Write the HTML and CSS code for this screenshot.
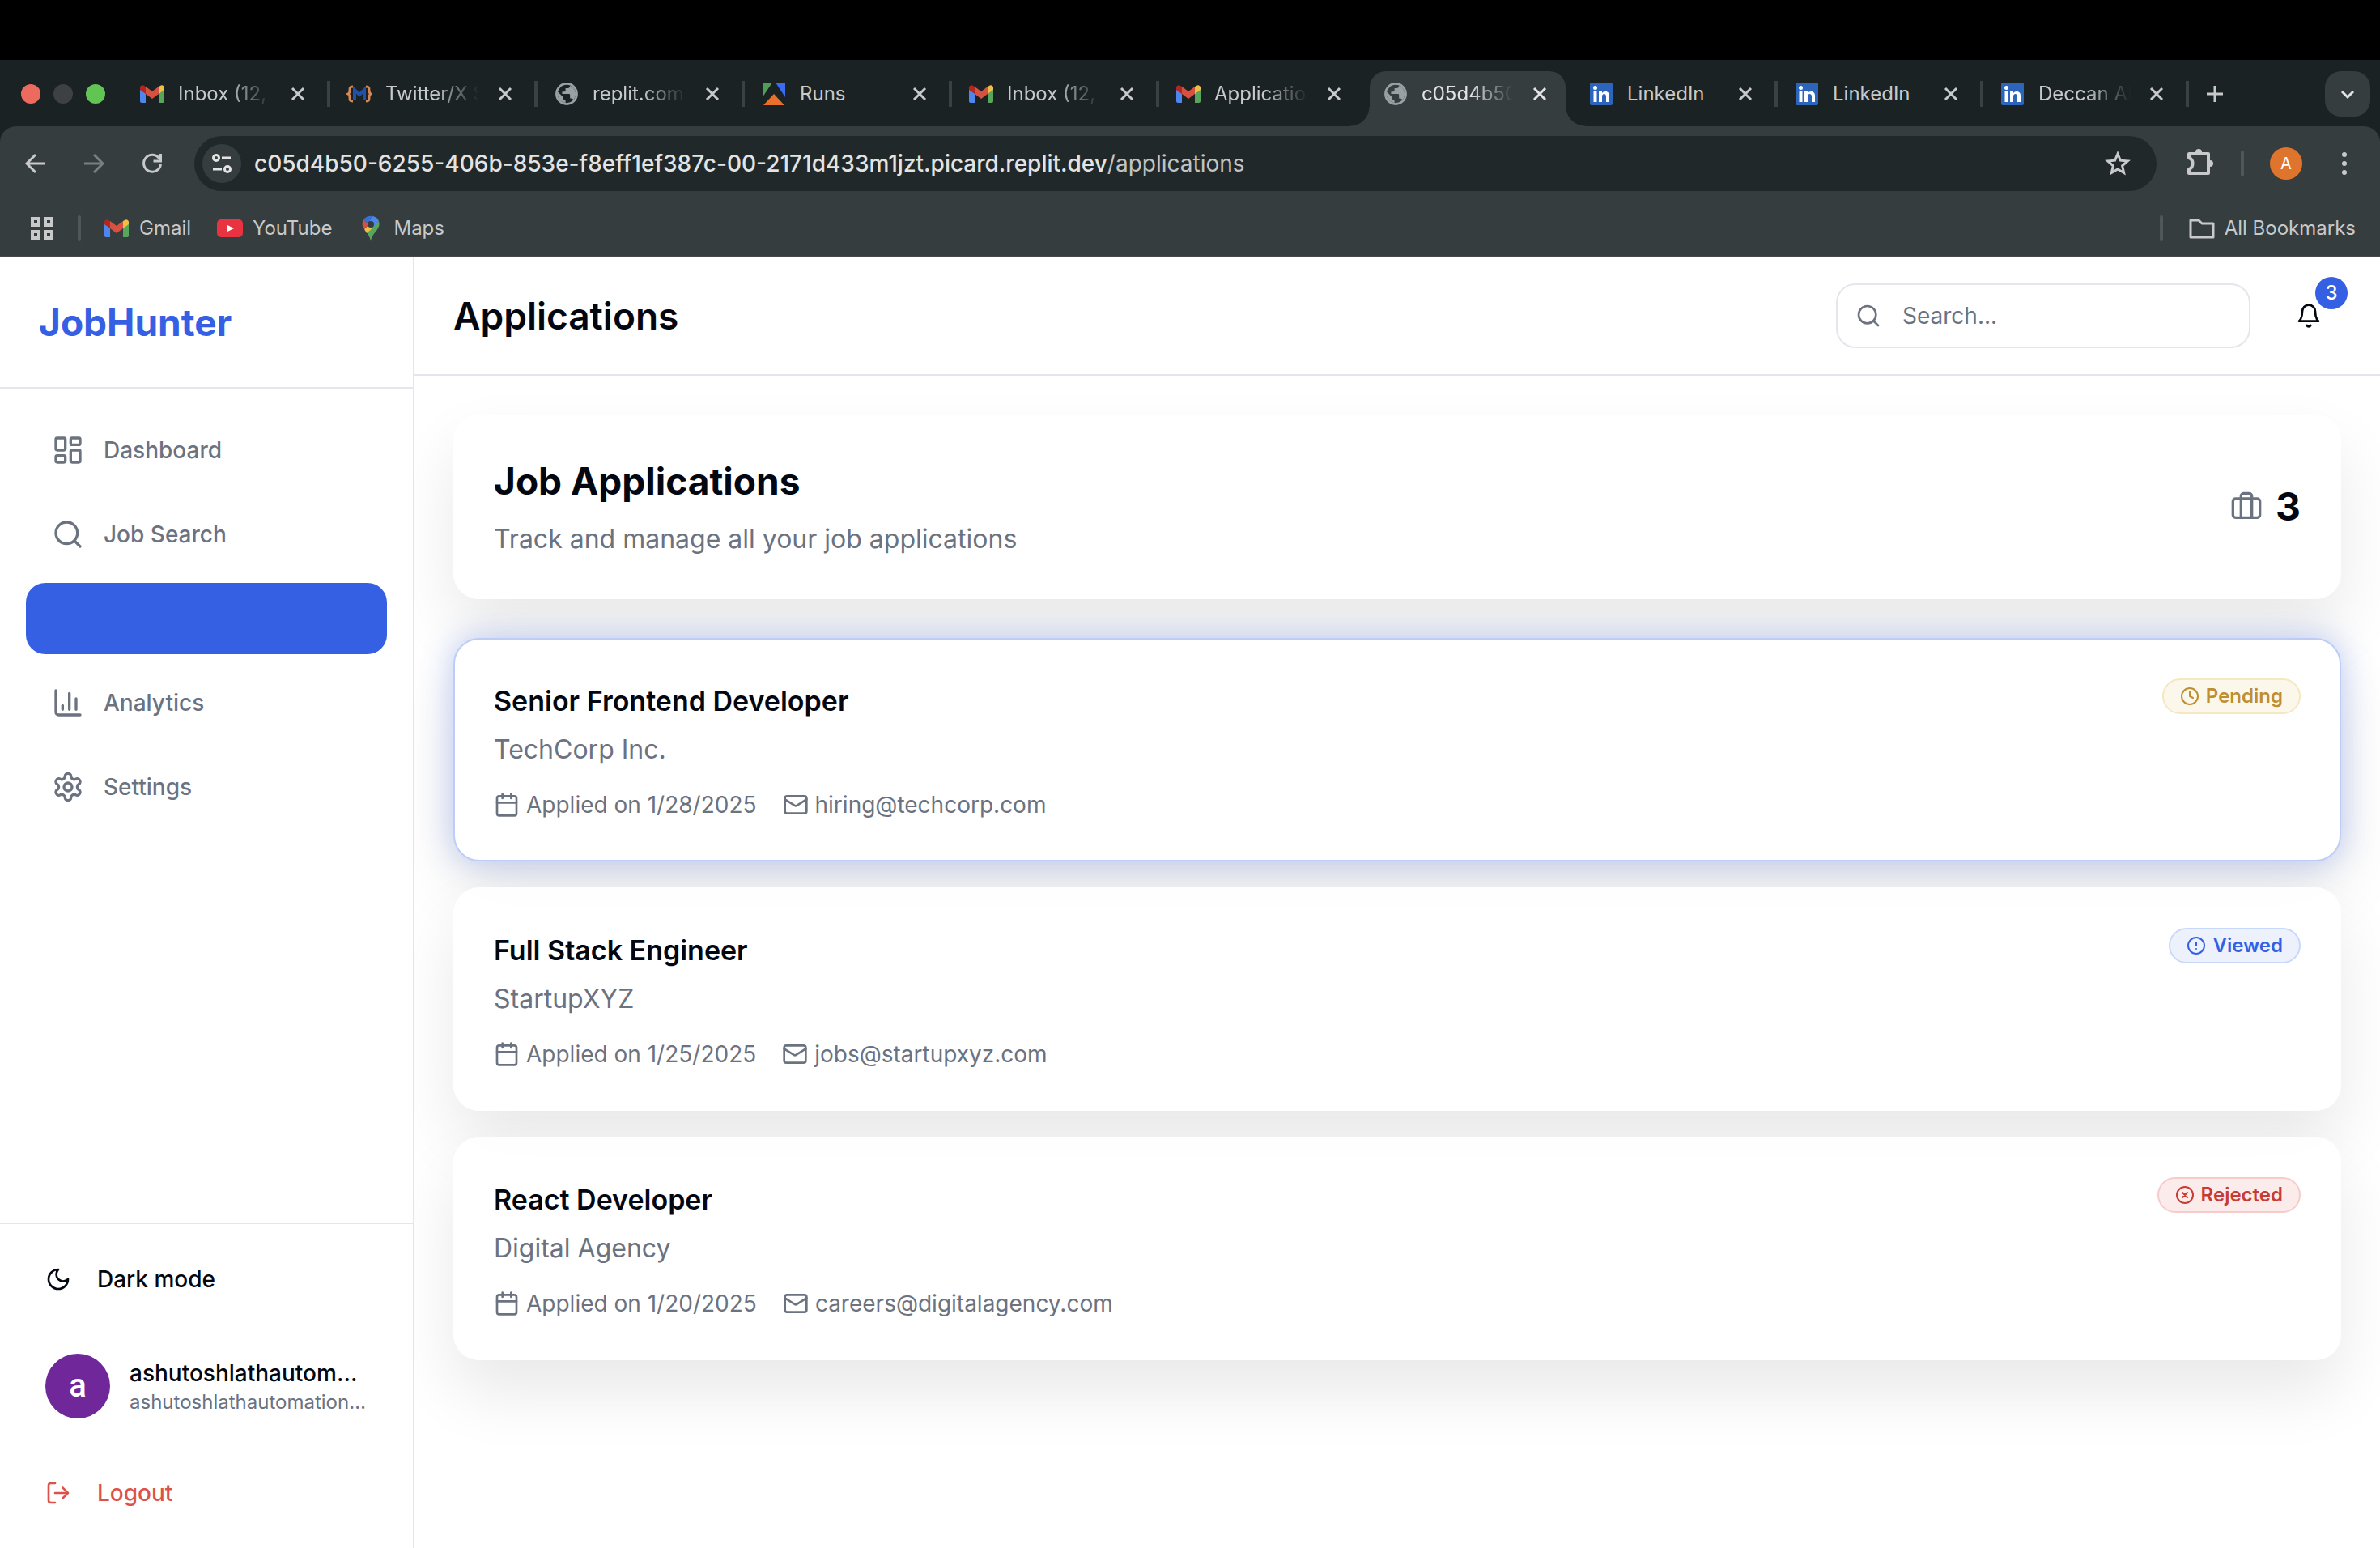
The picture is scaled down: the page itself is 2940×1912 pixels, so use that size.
FILE: index.html
```html
<!DOCTYPE html>
<html lang="en">
<head>
<meta charset="utf-8">
<title>JobHunter – Applications</title>
<link rel="stylesheet" href="styles.css">
</head>
<body>
<svg class="defs" aria-hidden="true">
  <symbol id="gmail" viewBox="0 0 32 32"><path fill="#4f86ec" d="M1 10l7 5v12H3a2 2 0 0 1-2-2z"/><path fill="#58a55c" d="M31 10l-7 5v12h5a2 2 0 0 0 2-2z"/><path fill="#f1bd42" d="M24 7l2-1c2-2 5 0 5 2v3l-7 5z"/><path fill="#b3261e" d="M8 7L6 6C4 4 1 6 1 8v3l7 5z"/><path fill="#d85140" d="M8 7l8 6 8-6v9l-8 6-8-6z"/></symbol>
  <symbol id="globe" viewBox="0.5 0.5 23 23"><circle cx="12" cy="12" r="9" fill="none" stroke="#9aa0a4" stroke-width="2"/><path fill="#9aa0a4" d="M11 19.930c-3.950-.49-7-3.850-7-7.930 0-.62.08-1.210.21-1.790L9 15v1c0 1.100.9 2 2 2zM17.900 17.390c-.26-.81-1-1.390-1.900-1.390h-1v-3c0-.55-.45-1-1-1H8v-2h2c.55 0 1-.45 1-1V7h2c1.100 0 2-.9 2-2v-.41c2.930 1.190 5 4.060 5 7.410 0 2.080-.8 3.970-2.100 5.390z"/></symbol>
  <symbol id="linkedin" viewBox="0 0 32 32"><rect x="2" y="2" width="28" height="28" rx="2" fill="#2d64bc"/><g fill="#fff"><circle cx="8.500" cy="8.500" r="2.500"/><path d="M6.500 13h4v13h-4zM13 13h4v2c2-3 9-3 9 3v8h-4v-7c0-4-5-4-5 0v7h-4z"/></g></symbol>
  <symbol id="close" viewBox="0 0 20 20"><path d="M3 3l14 14M17 3L3 17" stroke="currentColor" stroke-width="3" fill="none"/></symbol>
  <symbol id="calendar" viewBox="0 0 24 24"><path d="M8 2v4M16 2v4M3 10h18"/><rect x="3" y="4" width="18" height="18" rx="2"/></symbol>
  <symbol id="mail" viewBox="0 0 24 24"><rect x="2" y="4" width="20" height="16" rx="2"/><path d="m22 7-8.970 5.700a1.940 1.940 0 0 1-2.060 0L2 7"/></symbol>
  <symbol id="search" viewBox="0 0 24 24"><circle cx="11" cy="11" r="8"/><path d="m21 21-4.300-4.300"/></symbol>
</svg>

<div class="browser">
  <div class="tabstrip">
    <div class="lights"><i class="red"></i><i class="gray"></i><i class="green"></i></div>
    <div class="tabs">
      <div class="tab"><svg class="fav"><use href="#gmail"/></svg><span class="fade">Inbox (12,</span><button aria-label="Close tab"><svg><use href="#close"/></svg></button></div>
      <div class="tab"><svg class="fav" viewBox="0 0 32 32"><g fill="none" stroke="#d68a52" stroke-width="3"><path d="M8 7c-4 0-4 1-4 5 0 2 0 3-2 4 2 1 2 2 2 4 0 4 0 5 4 5M24 7c4 0 4 1 4 5 0 2 0 3 2 4-2 1-2 2-2 4 0 4 0 5-4 5"/></g><path fill="none" stroke="#234fae" stroke-width="4" d="M10 24V11l6 6 6-6v13"/></svg><span class="fade">Twitter/X S</span><button aria-label="Close tab"><svg><use href="#close"/></svg></button></div>
      <div class="tab"><svg class="fav"><use href="#globe"/></svg><span class="fade">replit.com</span><button aria-label="Close tab"><svg><use href="#close"/></svg></button></div>
      <div class="tab"><svg class="fav" viewBox="0 0 32 32"><path fill="#4f9e56" d="M2 2h12L2 20z"/><path fill="#3a6cf0" d="M18 2h12v18z"/><path fill="#e8702a" d="M16 16l13 14H3z"/></svg><span>Runs</span><button aria-label="Close tab"><svg><use href="#close"/></svg></button></div>
      <div class="tab"><svg class="fav"><use href="#gmail"/></svg><span class="fade">Inbox (12,</span><button aria-label="Close tab"><svg><use href="#close"/></svg></button></div>
      <div class="tab last"><svg class="fav"><use href="#gmail"/></svg><span class="fade">Applicatio</span><button aria-label="Close tab"><svg><use href="#close"/></svg></button></div>
      <div class="tab active"><svg class="fav"><use href="#globe"/></svg><span class="fade">c05d4b50</span><button aria-label="Close tab"><svg><use href="#close"/></svg></button></div>
      <div class="tab"><svg class="fav"><use href="#linkedin"/></svg><span>LinkedIn</span><button aria-label="Close tab"><svg><use href="#close"/></svg></button></div>
      <div class="tab"><svg class="fav"><use href="#linkedin"/></svg><span>LinkedIn</span><button aria-label="Close tab"><svg><use href="#close"/></svg></button></div>
      <div class="tab"><svg class="fav"><use href="#linkedin"/></svg><span class="fade">Deccan AI</span><button aria-label="Close tab"><svg><use href="#close"/></svg></button></div>
    </div>
    <button class="newtab" aria-label="New tab"><svg viewBox="0 0 24 24"><path d="M12 2v20M2 12h20" stroke="currentColor" stroke-width="3"/></svg></button>
    <button class="tabmenu" aria-label="Search tabs"><svg viewBox="0 0 24 24"><path d="M5 9l7 7 7-7" fill="none" stroke="currentColor" stroke-width="3"/></svg></button>
  </div>
  <div class="toolbar">
    <button aria-label="Back"><svg viewBox="0 0 32 32"><path d="M28 16H5M16 5L5 16l11 11"/></svg></button>
    <button class="dim" aria-label="Forward"><svg viewBox="0 0 32 32"><path d="M4 16h23M16 5l11 11-11 11"/></svg></button>
    <button aria-label="Reload"><svg viewBox="0 0 32 32"><path d="M24.500 9.500A10.500 10.500 0 1 0 26.500 17M26.500 4v9h-9"/></svg></button>
    <div class="omnibox">
      <button class="site" aria-label="Site information"><svg viewBox="0 0 32 32"><circle cx="9" cy="9" r="3.500"/><path d="M16 9h11M5 23h11"/><circle cx="23" cy="23" r="3.500"/></svg></button>
      <a class="url" href="#">c05d4b50-6255-406b-853e-f8eff1ef387c-00-2171d433m1jzt.picard.replit.dev<span>/applications</span></a>
      <button class="star" aria-label="Bookmark this tab"><svg viewBox="0 0 32 32"><path d="M16 4l3.400 8.200 8.900.8-6.700 5.800 2 8.700L16 23l-7.600 4.500 2-8.700-6.700-5.800 8.900-.8z"/></svg></button>
    </div>
    <button class="ext" aria-label="Extensions"><svg viewBox="0 0 36 36"><path d="M6 6h24v24H6v-5c6-2 6-12 0-14z" stroke-width="4" stroke-linejoin="round"/><g fill="currentColor" stroke="none"><circle cx="18" cy="4" r="4"/><circle cx="32" cy="18" r="4"/></g></svg></button>
    <i class="sep"></i>
    <button class="profile" aria-label="Profile">A</button>
    <button class="more" aria-label="Menu"><svg viewBox="0 0 32 32"><g fill="currentColor" stroke="none"><circle cx="16" cy="5" r="3"/><circle cx="16" cy="16" r="3"/><circle cx="16" cy="27" r="3"/></g></svg></button>
  </div>
  <div class="bookmarks">
    <button aria-label="Apps"><svg viewBox="0 0 32 32"><path d="M4 4h8v8H4zM20 4h8v8h-8zM4 20h8v8H4zM20 20h8v8h-8z"/></svg></button>
    <i class="sep"></i>
    <a class="first" href="#"><svg><use href="#gmail"/></svg>Gmail</a>
    <a href="#"><svg viewBox="0 0 32 32"><rect y="5" width="32" height="22" rx="5" fill="#ea3340"/><path fill="#fff" d="M13 12l8 4-8 4z"/></svg>YouTube</a>
    <a href="#"><svg viewBox="0 0 32 32"><path fill="#58a55c" d="M26 7c3 11-8 13-10 25-1-5-3-8-5-11z"/><path fill="#f1bd42" d="M8 17l5-5 6 3-8 7c-1-2-2-3-3-5z"/><path fill="#d85140" d="M7 5l6 6-5 6c-3-4-3-8-1-12z"/><path fill="#3b6fd8" d="M7 5c3-4 8-5 12-4l-7 9z"/><path fill="#4f86ec" d="M19 1c3 1 6 3 7 6l-8 9-6-6z"/><circle cx="16" cy="11" r="4" fill="#363d3f"/></svg>Maps</a>
    <i class="sep push"></i>
    <a class="all" href="#"><svg viewBox="0 0 32 32"><path d="M2 6h10l4 4h14v17H2z" fill="none" stroke="currentColor" stroke-width="3" stroke-linejoin="round"/></svg>All Bookmarks</a>
  </div>
</div>

<div class="app">
  <aside class="sidebar">
    <div class="brand">JobHunter</div>
    <nav class="nav">
      <a href="#"><svg class="ic" viewBox="0 0 24 24"><rect width="7" height="9" x="3" y="3" rx="1"/><rect width="7" height="5" x="14" y="3" rx="1"/><rect width="7" height="9" x="14" y="12" rx="1"/><rect width="7" height="5" x="3" y="16" rx="1"/></svg>Dashboard</a>
      <a href="#"><svg class="ic"><use href="#search"/></svg>Job Search</a>
      <a class="current" href="#" aria-current="page" aria-label="Applications"></a>
      <a href="#"><svg class="ic" viewBox="0 0 24 24"><path d="M3 3v16a2 2 0 0 0 2 2h16M18 17V9M13 17V5M8 17v-3"/></svg>Analytics</a>
      <a href="#"><svg class="ic" viewBox="0 0 24 24"><path d="M12.220 2h-.44a2 2 0 0 0-2 2v.18a2 2 0 0 1-1 1.730l-.43.25a2 2 0 0 1-2 0l-.15-.08a2 2 0 0 0-2.730.73l-.22.38a2 2 0 0 0 .73 2.730l.15.1a2 2 0 0 1 1 1.720v.51a2 2 0 0 1-1 1.740l-.15.09a2 2 0 0 0-.73 2.730l.22.38a2 2 0 0 0 2.730.73l.15-.08a2 2 0 0 1 2 0l.43.25a2 2 0 0 1 1 1.730V20a2 2 0 0 0 2 2h.44a2 2 0 0 0 2-2v-.18a2 2 0 0 1 1-1.730l.43-.25a2 2 0 0 1 2 0l.15.08a2 2 0 0 0 2.730-.73l.22-.39a2 2 0 0 0-.73-2.730l-.15-.08a2 2 0 0 1-1-1.740v-.5a2 2 0 0 1 1-1.740l.15-.09a2 2 0 0 0 .73-2.730l-.22-.38a2 2 0 0 0-2.730-.73l-.15.08a2 2 0 0 1-2 0l-.43-.25a2 2 0 0 1-1-1.730V4a2 2 0 0 0-2-2z"/><circle cx="12" cy="12" r="3"/></svg>Settings</a>
    </nav>
    <div class="account">
      <button class="row"><svg class="ic" viewBox="0 0 24 24"><path d="M12 3a6 6 0 0 0 9 9 9 9 0 1 1-9-9Z"/></svg>Dark mode</button>
      <div class="user">
        <div class="avatar">a</div>
        <div><div class="name">ashutoshlathautom…</div><div class="email">ashutoshlathautomation…</div></div>
      </div>
      <button class="row logout"><svg class="ic" viewBox="0 0 24 24"><path d="M9 21H5a2 2 0 0 1-2-2V5a2 2 0 0 1 2-2h4M16 17l5-5-5-5M21 12H9"/></svg>Logout</button>
    </div>
  </aside>

  <div class="page">
    <header class="topbar">
      <h1>Applications</h1>
      <label class="search"><svg class="ic"><use href="#search"/></svg><input type="search" placeholder="Search..." aria-label="Search"></label>
      <button class="bell" aria-label="Notifications"><svg class="ic" viewBox="0 0 24 24"><path d="M6 8a6 6 0 0 1 12 0c0 7 3 9 3 9H3s3-2 3-9M10.300 21a1.940 1.940 0 0 0 3.400 0"/></svg><span>3</span></button>
    </header>
    <main class="content">
      <section class="card summary">
        <div><h2>Job Applications</h2><p>Track and manage all your job applications</p></div>
        <div class="count"><svg class="ic" viewBox="0 0 24 24"><rect x="2" y="6" width="20" height="14" rx="2"/><path d="M16 20V4a2 2 0 0 0-2-2h-4a2 2 0 0 0-2 2v16"/></svg>3</div>
      </section>
      <div class="list">
        <article class="card job glow">
          <div><h3>Senior Frontend Developer</h3><p>TechCorp Inc.</p>
            <div class="meta"><span><svg class="ic"><use href="#calendar"/></svg>Applied on 1/28/2025</span><span><svg class="ic"><use href="#mail"/></svg>hiring@techcorp.com</span></div></div>
          <div class="badge pending"><svg class="ic" viewBox="0 0 24 24"><circle cx="12" cy="12" r="10"/><path d="M12 6v6l4 2"/></svg>Pending</div>
        </article>
        <article class="card job">
          <div><h3>Full Stack Engineer</h3><p>StartupXYZ</p>
            <div class="meta"><span><svg class="ic"><use href="#calendar"/></svg>Applied on 1/25/2025</span><span><svg class="ic"><use href="#mail"/></svg>jobs@startupxyz.com</span></div></div>
          <div class="badge viewed"><svg class="ic" viewBox="0 0 24 24"><circle cx="12" cy="12" r="10"/><path d="M12 8v4M12 16h.01"/></svg>Viewed</div>
        </article>
        <article class="card job">
          <div><h3>React Developer</h3><p>Digital Agency</p>
            <div class="meta"><span><svg class="ic"><use href="#calendar"/></svg>Applied on 1/20/2025</span><span><svg class="ic"><use href="#mail"/></svg>careers@digitalagency.com</span></div></div>
          <div class="badge rejected"><svg class="ic" viewBox="0 0 24 24"><circle cx="12" cy="12" r="10"/><path d="m15 9-6 6M9 9l6 6"/></svg>Rejected</div>
        </article>
      </div>
    </main>
  </div>
</div>
</body>
</html>
```
FILE: styles.css
```css
:root {
  --primary: #3660e3;
  --ink: #030711;
  --muted: #6b7280;
  --line: #e5e6eb;
  --chrome: #363d3f;
}

* { box-sizing: border-box; }

body {
  margin: 0;
  min-height: 100vh;
  display: flex;
  flex-direction: column;
  background: #fff;
  color: var(--ink);
  font-family: Inter, "Liberation Sans", sans-serif;
  font-size: 28px;
  line-height: 40px;
}

h1, h2, h3, p { margin: 0; }
a { color: inherit; text-decoration: none; }
button { border: 0; padding: 0; margin: 0; background: none; color: inherit; font: inherit; }
svg { display: block; flex: none; }
.defs { position: absolute; width: 0; height: 0; }

.ic {
  width: 32px;
  height: 32px;
  fill: none;
  stroke: currentColor;
  stroke-width: 2;
  stroke-linecap: round;
  stroke-linejoin: round;
}

/* Browser window */
.browser {
  padding-top: 74px;
  background: linear-gradient(#000 74px, #1b2224 74px);
  color: #c7c9ca;
  font-size: 24px;
  line-height: 32px;
}

.tabstrip { display: flex; align-items: center; height: 82px; padding: 2px 12px 0 0; }
.lights { display: flex; gap: 16px; width: 152px; padding-left: 26px; }
.lights i { width: 24px; height: 24px; border-radius: 50%; }
.red { background: #ed6a5e; }
.gray { background: #3d4144; }
.green { background: #61c554; }

.tabs {
  display: grid;
  grid-template-columns: repeat(6, minmax(0, 256fr)) repeat(4, minmax(0, 254fr));
  flex: 1;
  max-width: 2552px;
  align-self: stretch;
  align-items: center;
}
.tab {
  display: flex;
  align-items: center;
  height: 32px;
  padding: 0 26px 0 20px;
  border-right: 4px solid #3a4143;
}
.tab.last { border-color: transparent; }
.fav { width: 32px; height: 32px; margin-right: 16px; }
.tab span { flex: 1; min-width: 0; margin-right: 16px; white-space: nowrap; }
.tab .fade {
  -webkit-mask-image: linear-gradient(90deg, #000 50%, transparent 95%);
  mask-image: linear-gradient(90deg, #000 50%, transparent 95%);
}
.tab button svg { width: 20px; height: 20px; }
.tab.active {
  position: relative;
  align-self: end;
  height: 68px;
  margin: 0 8px 0 4px;
  padding: 0 22px 12px 16px;
  border: 0;
  border-radius: 20px 20px 0 0;
  background: var(--chrome);
  color: #e3e3e3;
}
.tab.active::before, .tab.active::after {
  content: "";
  position: absolute;
  bottom: 0;
  width: 24px;
  height: 24px;
}
.tab.active::before { right: 100%; background: radial-gradient(circle at 0 0, transparent 23px, var(--chrome) 24px); }
.tab.active::after { left: 100%; background: radial-gradient(circle at 100% 0, transparent 23px, var(--chrome) 24px); }

.newtab { padding: 0 20px; }
.newtab svg { width: 24px; height: 24px; }
.tabmenu {
  display: grid;
  place-items: center;
  width: 56px;
  height: 56px;
  margin-left: auto;
  border-radius: 20px;
  background: var(--chrome);
  color: #e3e3e3;
}
.tabmenu svg { width: 24px; height: 24px; }

.toolbar {
  display: flex;
  align-items: center;
  height: 94px;
  padding: 0 28px 2px;
  border-radius: 20px 20px 0 0;
  background: var(--chrome);
}
.toolbar svg { width: 32px; height: 32px; fill: none; stroke: currentColor; stroke-width: 3; }
.toolbar > button { margin-right: 40px; }
.toolbar > .dim { color: #7a7f80; }
.omnibox {
  display: flex;
  flex: 1;
  align-items: center;
  height: 68px;
  margin-left: -4px;
  padding: 0 32px 0 10px;
  border-radius: 34px;
  background: #212829;
}
.site { display: grid; place-items: center; width: 48px; height: 48px; margin-right: 16px; border-radius: 50%; background: var(--chrome); color: #e3e3e3; }
.url { flex: 1; color: #e3e3e3; font-size: 28px; font-weight: 500; }
.url span { color: #c2c4c4; font-weight: 400; }
.toolbar > .ext { margin: 0 34px; }
.toolbar .ext svg { width: 36px; height: 36px; }
.sep { width: 4px; height: 32px; border-radius: 2px; background: #505759; }
.toolbar > .profile { width: 40px; height: 40px; margin: 0 36px 0 32px; border-radius: 50%; background: #df752c; color: #fff; font-size: 20px; }
.toolbar > .more { margin: 0; }

.bookmarks {
  display: flex;
  align-items: center;
  height: 68px;
  padding: 0 30px 2px 36px;
  border-bottom: 2px solid #4a4749;
  background: var(--chrome);
}
.bookmarks svg { width: 32px; height: 32px; }
.bookmarks button svg { fill: none; stroke: currentColor; stroke-width: 4; }
.bookmarks button { margin-right: 28px; }
.bookmarks a { display: flex; align-items: center; gap: 12px; margin-left: 32px; }
.bookmarks .first { margin-left: 28px; }
.push { margin-left: auto; }

/* Application shell */
.app { display: flex; flex: 1; }

.sidebar { display: flex; flex-direction: column; width: 512px; border-right: 2px solid var(--line); background: #fff; }
.brand {
  padding: 48px;
  border-bottom: 2px solid var(--line);
  color: var(--primary);
  font-size: 46px;
  font-weight: 700;
  line-height: 64px;
}
.nav { display: flex; flex: 1; flex-direction: column; gap: 16px; padding: 32px; }
.nav a {
  display: flex;
  align-items: center;
  gap: 24px;
  height: 88px;
  padding: 0 32px;
  border-radius: 24px;
  color: var(--muted);
  font-weight: 500;
}
.nav .ic { width: 40px; height: 40px; }
.nav .current { background: var(--primary); }

.account { padding: 32px; border-top: 2px solid var(--line); }
.row { display: flex; align-items: center; gap: 32px; width: 100%; height: 72px; padding: 0 24px; font-weight: 500; }
.logout { color: #dc524a; }
.user { display: flex; align-items: center; gap: 24px; height: 192px; padding: 0 24px; }
.avatar { width: 80px; height: 80px; border-radius: 50%; background: #70279a; color: #fff; font: 500 40px/80px Roboto, sans-serif; text-align: center; }
.name { font-weight: 500; }
.email { color: var(--muted); font-size: 24px; line-height: 32px; }

.page { display: flex; flex: 1; flex-direction: column; min-width: 0; overflow: hidden; }
.topbar { display: flex; align-items: center; gap: 32px; height: 146px; padding: 0 48px; border-bottom: 2px solid var(--line); }
h1 { flex: 1; font-size: 46px; font-weight: 600; line-height: 64px; }
.search { display: flex; align-items: center; gap: 26px; width: 512px; height: 80px; padding: 0 22px; border: 2px solid var(--line); border-radius: 24px; color: var(--muted); }
.search input { flex: 1; min-width: 0; padding: 0; border: 0; outline: 0; background: none; font: inherit; }
.search input::placeholder { color: var(--muted); opacity: 1; }
.bell { position: relative; display: grid; place-items: center; width: 80px; height: 80px; }
.bell span {
  position: absolute;
  top: -8px;
  right: -8px;
  width: 40px;
  height: 40px;
  border-radius: 50%;
  background: var(--primary);
  color: #fff;
  font-size: 24px;
  font-weight: 500;
}

.content { display: flex; flex: 1; flex-direction: column; gap: 48px; padding: 48px; overflow: hidden; }
.card {
  display: flex;
  justify-content: space-between;
  padding: 48px;
  border: 2px solid transparent;
  border-radius: 32px;
  background: rgba(255, 255, 255, .88) border-box;
  box-shadow: 0 40px 80px rgba(0, 0, 0, .09);
}
.card p { color: var(--muted); font-size: 32px; line-height: 48px; }
.summary { align-items: center; }
h2 { margin-bottom: 16px; font-size: 46px; font-weight: 700; line-height: 64px; }
.count { display: flex; align-items: center; gap: 16px; font-size: 48px; font-weight: 700; line-height: 64px; }
.count .ic { width: 40px; height: 40px; color: var(--muted); }

.list { display: flex; flex-direction: column; gap: 32px; }
.job { align-items: flex-start; }
.glow {
  border-color: #becdf8;
  background: #fff;
  box-shadow: 0 0 40px rgba(54, 96, 227, .3), 0 40px 80px rgba(0, 0, 0, .09);
}
h3 { margin-bottom: 8px; font-size: 34px; font-weight: 600; line-height: 56px; }
.meta { display: flex; gap: 32px; margin-top: 24px; color: var(--muted); }
.meta span { display: flex; align-items: center; gap: 8px; }

.badge {
  display: flex;
  align-items: center;
  gap: 8px;
  padding: 4px 20px;
  border: 2px solid;
  border-radius: 22px;
  font-size: 24px;
  font-weight: 600;
  line-height: 32px;
}
.badge .ic { width: 24px; height: 24px; }
.pending { border-color: #f6e7c3; background: #fbf7ea; color: #c08d30; }
.viewed { border-color: #c7d8fa; background: #ecf1fc; color: var(--primary); }
.rejected { border-color: #f5cccb; background: #fbebeb; color: #c83b33; }
```
